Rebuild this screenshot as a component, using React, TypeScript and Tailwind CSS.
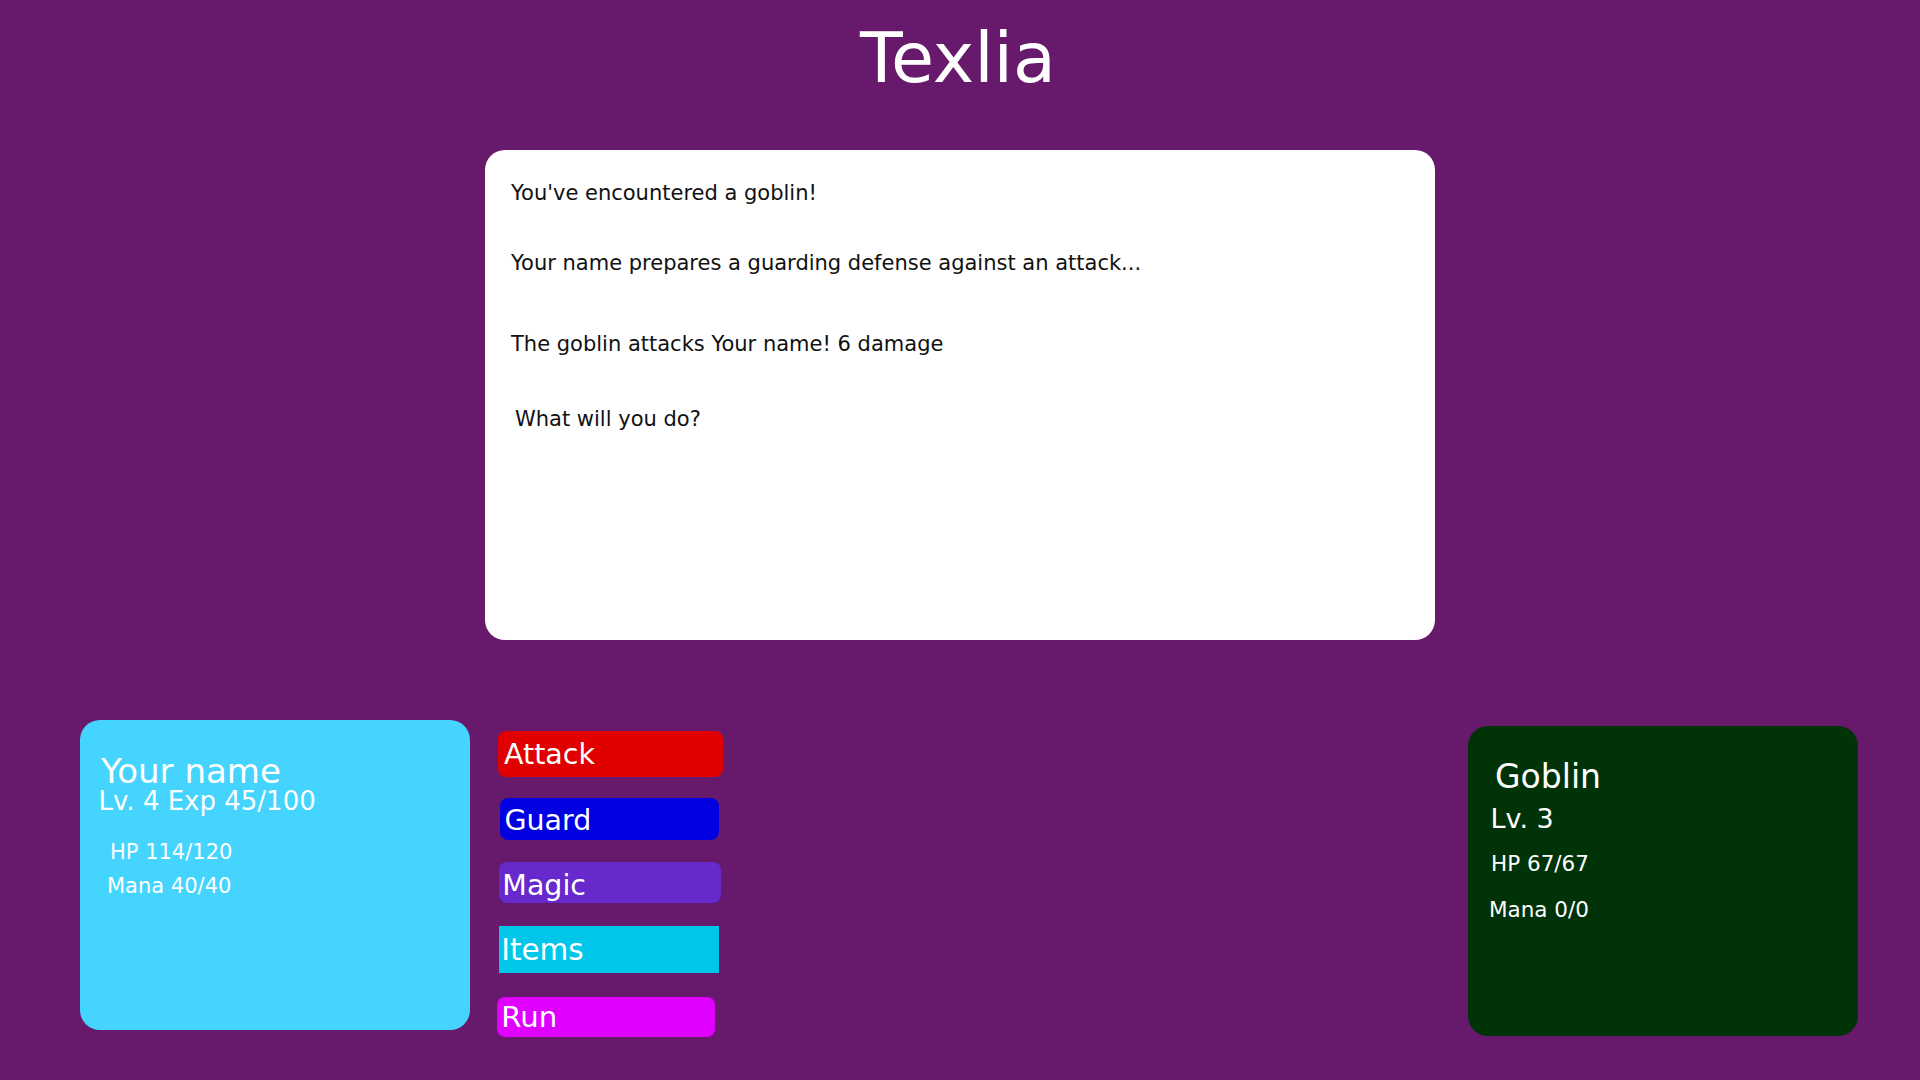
import React from "react";

export default function App() {
  return (
    <div className="min-h-screen w-full bg-[#671a6b] font-['DejaVu_Sans',Verdana,sans-serif] text-white flex flex-col">
      <div className="pt-[22.5px] flex justify-center pr-[4px]">
        <h1 className="text-[70px] leading-none font-normal">Texlia</h1>
      </div>

      <div className="mt-[57.5px] mx-auto w-[950px] h-[490px] bg-white rounded-[20px] text-[#111] text-[21px] leading-none pt-[33.2px] pl-[26px] flex flex-col">
        <p>You've encountered a goblin!</p>
        <p className="mt-[49px]">Your name prepares a guarding defense against an attack...</p>
        <p className="mt-[60px]">The goblin attacks Your name! 6 damage</p>
        <p className="mt-[54px] pl-[4px]">What will you do?</p>
      </div>

      <div className="mt-[80px] flex items-start">
        <div className="ml-[80px] w-[390px] h-[310px] bg-[#44d4fe] rounded-[20px] flex flex-col leading-none">
          <div className="mt-[33.6px] ml-[21px] text-[34px]">Your name</div>
          <div className="ml-[18.5px] text-[26px]">Lv. 4 Exp 45/100</div>
          <div className="mt-[28.6px] ml-[30px] text-[21px]">HP 114/120</div>
          <div className="mt-[13px] ml-[27px] text-[21px]">Mana 40/40</div>
        </div>

        <div className="ml-[26px] mt-[11px] flex flex-col leading-none text-[28.5px]">
          <button className="ml-[2px] w-[225px] h-[46px] bg-[#e00000] rounded-[8px] text-left pl-[6px] pt-[9.9px] flex items-start">
            Attack
          </button>
          <button className="mt-[21px] ml-[4px] w-[219px] h-[42px] bg-[#0000e0] rounded-[8px] text-left pl-[4.4px] pt-[8.9px] flex items-start">
            Guard
          </button>
          <button className="mt-[22px] ml-[3px] w-[222px] h-[41px] bg-[#6629cc] rounded-[8px] text-left pl-[3.3px] pt-[9.9px] flex items-start">
            Magic
          </button>
          <button className="mt-[23px] ml-[3px] w-[220px] h-[47px] bg-[#00c6e9] text-left pl-[2.2px] pt-[10.1px] flex items-start text-[29.5px]">
            Items
          </button>
          <button className="mt-[24px] ml-[1px] w-[218px] h-[40px] bg-[#e000ff] rounded-[8px] text-left pl-[4.2px] pt-[6.4px] flex items-start text-[29.2px]">
            Run
          </button>
        </div>

        <div className="ml-auto mr-[62px] mt-[6px] w-[390px] h-[310px] bg-[#003308] rounded-[20px] flex flex-col leading-none">
          <div className="mt-[34.1px] ml-[27px] text-[33px]">Goblin</div>
          <div className="mt-[12.1px] ml-[22.5px] text-[27px]">Lv. 3</div>
          <div className="mt-[20.6px] ml-[23px] text-[21.5px]">HP 67/67</div>
          <div className="mt-[24.5px] ml-[21px] text-[21.5px]">Mana 0/0</div>
        </div>
      </div>
    </div>
  );
}
